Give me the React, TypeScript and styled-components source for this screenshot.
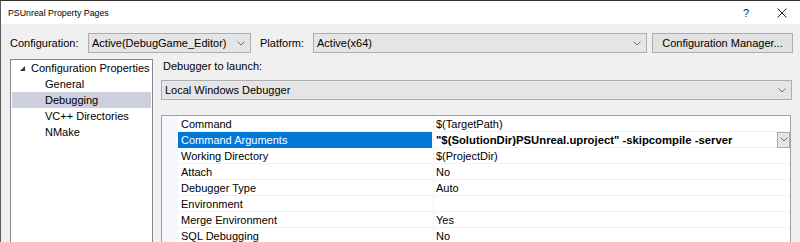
import React from "react";
import styled, { createGlobalStyle } from "styled-components";

const GlobalStyle = createGlobalStyle`
  html, body {
    margin: 0;
    padding: 0;
    background: #2b2b2b;
    overflow: hidden;
  }
  * {
    box-sizing: border-box;
  }
`;

const Window = styled.div`
  width: 800px;
  height: 242px;
  border-top: 1px solid #2e2e2e;
  border-left: 1px solid #5a5a5a;
  display: flex;
  flex-direction: column;
  overflow: hidden;
  font-family: "Liberation Sans", Arial, sans-serif;
  font-size: 11px;
  color: #000;
  background: #f0f0f0;
`;

const TitleBar = styled.div`
  height: 23px;
  flex: none;
  background: #fff;
  display: flex;
  align-items: center;
  padding-left: 7px;
  font-size: 8.8px;
`;

const Title = styled.div`
  flex: 1;
`;

const CaptionButton = styled.div`
  width: 36px;
  height: 23px;
  display: flex;
  align-items: center;
  justify-content: center;
  font-size: 11px;
  color: #222;
`;

const Body = styled.div`
  flex: 1;
  display: flex;
  flex-direction: column;
  padding: 9px 7px 0 9px;
  min-height: 0;
`;

const TopRow = styled.div`
  display: flex;
  align-items: center;
  height: 20px;
  flex: none;
`;

const Label = styled.div<{ $w: number }>`
  width: ${(p) => p.$w}px;
  flex: none;
  white-space: nowrap;
`;

const Combo = styled.div<{ $w: number; $gap?: number }>`
  width: ${(p) => p.$w}px;
  height: 20px;
  flex: none;
  margin-right: ${(p) => p.$gap ?? 0}px;
  background: #e5e5e5;
  border: 1px solid #adadad;
  display: flex;
  align-items: center;
  justify-content: space-between;
  padding: 0 5px 0 3px;
  white-space: nowrap;
`;

const Button = styled.div`
  width: 141px;
  height: 20px;
  flex: none;
  margin-left: 5px;
  background: #e1e1e1;
  border: 1px solid #adadad;
  display: flex;
  align-items: center;
  justify-content: center;
`;

const Main = styled.div`
  flex: 1;
  display: flex;
  margin-top: 6px;
  min-height: 0;
`;

const Tree = styled.div`
  width: 143px;
  flex: none;
  background: #fff;
  border: 1px solid #828790;
  border-bottom: none;
  padding: 0 1px;
`;

const TreeItem = styled.div<{ $indent: number; $selected?: boolean }>`
  height: 16px;
  display: flex;
  align-items: center;
  padding-left: ${(p) => p.$indent}px;
  background: ${(p) => (p.$selected ? "#cdcfdc" : "transparent")};
  white-space: nowrap;
`;

const Expander = styled.svg`
  width: 5px;
  height: 5px;
  margin-right: 6px;
`;

const RightPane = styled.div`
  flex: 1;
  margin-left: 8px;
  display: flex;
  flex-direction: column;
  min-width: 0;
`;

const SectionLabel = styled.div`
  height: 14px;
  padding-left: 2px;
  display: flex;
  align-items: center;
`;

const Launch = styled(Combo)`
  margin-top: 7px;
  padding-left: 3px;
`;

const Grid = styled.div`
  margin-top: 15px;
  width: 630px;
  flex: 1;
  background: #fff;
  border: 1px solid #a0a0a0;
  border-bottom: none;
  overflow: hidden;
`;

const Row = styled.div`
  display: flex;
  height: 16px;
`;

const Margin = styled.div`
  width: 16px;
  flex: none;
  background: #f5f7fb;
`;

const NameCell = styled.div<{ $selected?: boolean }>`
  width: 254px;
  flex: none;
  padding: 1px 0 0 3px;
  display: flex;
  align-items: center;
  white-space: nowrap;
  background: ${(p) => (p.$selected ? "#0078d7" : "#fff")};
  color: ${(p) => (p.$selected ? "#fff" : "#000")};
  border-bottom: 1px solid ${(p) => (p.$selected ? "#0078d7" : "#f0f2f8")};
`;

const ValueCell = styled.div<{ $bold?: boolean }>`
  flex: 1;
  margin-left: 1px;
  padding: 1px 0 0 2px;
  display: flex;
  align-items: center;
  justify-content: space-between;
  white-space: nowrap;
  font-weight: ${(p) => (p.$bold ? "bold" : "normal")};
  font-size: ${(p) => (p.$bold ? "11.3px" : "11px")};
  border-bottom: 1px solid #f0f2f8;
  border-left: 1px solid #f0f2f8;
`;

const CellDrop = styled.div`
  width: 13px;
  height: 16px;
  margin-top: -1px;
  background: #e5e5e5;
  border: 1px solid #adadad;
  display: flex;
  align-items: center;
  justify-content: center;
`;

const Chevron = ({ color = "#6e6e6e" }: { color?: string }) => (
  <svg width="8" height="5" viewBox="0 0 8 5">
    <polyline points="0.5,0.5 4,4 7.5,0.5" fill="none" stroke={color} strokeWidth="1" />
  </svg>
);

const props = [
  { name: "Command", value: "$(TargetPath)" },
  { name: "Command Arguments", value: '"$(SolutionDir)PSUnreal.uproject" -skipcompile -server', selected: true },
  { name: "Working Directory", value: "$(ProjectDir)" },
  { name: "Attach", value: "No" },
  { name: "Debugger Type", value: "Auto" },
  { name: "Environment", value: "" },
  { name: "Merge Environment", value: "Yes" },
  { name: "SQL Debugging", value: "No" },
];

const App = () => (
  <>
    <GlobalStyle />
    <Window>
      <TitleBar>
        <Title>PSUnreal Property Pages</Title>
        <CaptionButton>?</CaptionButton>
        <CaptionButton>
          <svg width="10" height="10" viewBox="0 0 10 10">
            <path d="M0.5 0.5 L9.5 9.5 M9.5 0.5 L0.5 9.5" stroke="#222" strokeWidth="1" />
          </svg>
        </CaptionButton>
      </TitleBar>
      <Body>
        <TopRow>
          <Label $w={78}>Configuration:</Label>
          <Combo $w={163} $gap={9}>
            <span>Active(DebugGame_Editor)</span>
            <Chevron />
          </Combo>
          <Label $w={53}>Platform:</Label>
          <Combo $w={334}>
            <span>Active(x64)</span>
            <Chevron />
          </Combo>
          <Button>Configuration Manager...</Button>
        </TopRow>
        <Main>
          <Tree>
            <TreeItem $indent={8}>
              <Expander viewBox="0 0 5 5">
                <polygon points="5,0 5,5 0,5" fill="#333" />
              </Expander>
              Configuration Properties
            </TreeItem>
            <TreeItem $indent={33}>General</TreeItem>
            <TreeItem $indent={33} $selected>
              Debugging
            </TreeItem>
            <TreeItem $indent={33}>VC++ Directories</TreeItem>
            <TreeItem $indent={33}>NMake</TreeItem>
          </Tree>
          <RightPane>
            <SectionLabel>Debugger to launch:</SectionLabel>
            <Launch $w={631}>
              <span>Local Windows Debugger</span>
              <Chevron />
            </Launch>
            <Grid>
              {props.map((p) => (
                <Row key={p.name}>
                  <Margin />
                  <NameCell $selected={p.selected}>{p.name}</NameCell>
                  <ValueCell $bold={p.selected}>
                    <span>{p.value}</span>
                    {p.selected && (
                      <CellDrop>
                        <Chevron />
                      </CellDrop>
                    )}
                  </ValueCell>
                </Row>
              ))}
            </Grid>
          </RightPane>
        </Main>
      </Body>
    </Window>
  </>
);

export default App;
